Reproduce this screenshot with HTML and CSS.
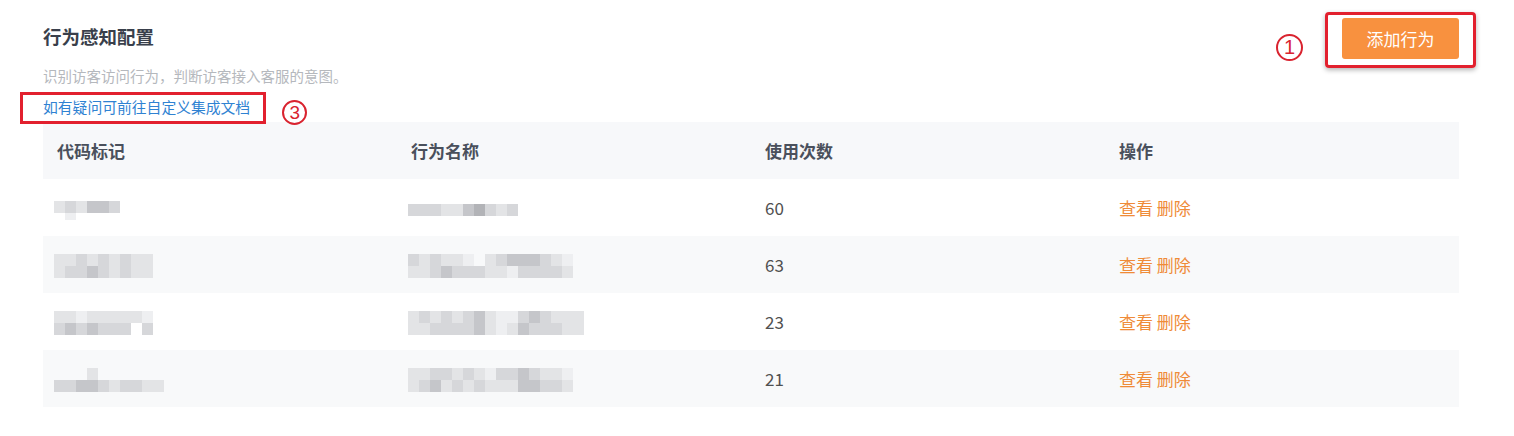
FILE: index.html
```html
<!DOCTYPE html>
<html>
<head>
    <meta charset="utf-8">
    <title>行为感知配置</title>
    <link rel="stylesheet" href="styles.css">
</head>
<body>
    <div class="page">
        <div class="top">
            <div class="intro">
                <h2 class="title">行为感知配置</h2>
                <p class="desc">识别访客访问行为，判断访客接入客服的意图。</p>
                <div class="help">
                    <div class="mark-box help-box">
                        <a href="#">如有疑问可前往自定义集成文档</a>
                    </div>
                    <span class="circle-num num-3">3</span>
                </div>
            </div>

            <div class="actions">
                <span class="circle-num num-1">1</span>
                <div class="mark-box btn-box">
                    <button class="btn-add">添加行为</button>
                </div>
            </div>
        </div>

        <table class="behavior-table">
            <thead>
                <tr>
                    <th>代码标记</th>
                    <th>行为名称</th>
                    <th>使用次数</th>
                    <th>操作</th>
                </tr>
            </thead>
            <tbody>
                <tr>
                    <td>
                        <div class="mosaic">
                            <div class="mrow"><i class="b"></i><i class="c"></i><i class="b"></i><i class="d"></i><i class="d"></i><i class="c"></i></div>
                            <div class="mrow short"><i class="o"></i><i class="a"></i></div>
                        </div>
                    </td>
                    <td>
                        <div class="mosaic">
                            <div class="mrow"><i class="c"></i><i class="c"></i><i class="c"></i><i class="b"></i><i class="b"></i><i class="d"></i><i class="e"></i><i class="c"></i><i class="b"></i><i class="c"></i></div>
                        </div>
                    </td>
                    <td>60</td>
                    <td><a class="op" href="#">查看</a> <a class="op" href="#">删除</a></td>
                </tr>
                <tr class="alt">
                    <td>
                        <div class="mosaic">
                            <div class="mrow"><i class="b"></i><i class="b"></i><i class="c"></i><i class="b"></i><i class="c"></i><i class="b"></i><i class="c"></i><i class="b"></i><i class="b"></i></div>
                            <div class="mrow"><i class="b"></i><i class="c"></i><i class="c"></i><i class="d"></i><i class="c"></i><i class="b"></i><i class="c"></i><i class="b"></i><i class="b"></i></div>
                        </div>
                    </td>
                    <td>
                        <div class="mosaic">
                            <div class="mrow"><i class="c"></i><i class="b"></i><i class="c"></i><i class="b"></i><i class="b"></i><i class="a"></i><i class="o"></i><i class="b"></i><i class="c"></i><i class="d"></i><i class="d"></i><i class="d"></i><i class="c"></i><i class="b"></i><i class="a"></i></div>
                            <div class="mrow"><i class="b"></i><i class="b"></i><i class="c"></i><i class="d"></i><i class="c"></i><i class="c"></i><i class="c"></i><i class="b"></i><i class="b"></i><i class="a"></i><i class="c"></i><i class="c"></i><i class="c"></i><i class="c"></i><i class="b"></i></div>
                        </div>
                    </td>
                    <td>63</td>
                    <td><a class="op" href="#">查看</a> <a class="op" href="#">删除</a></td>
                </tr>
                <tr>
                    <td>
                        <div class="mosaic">
                            <div class="mrow"><i class="b"></i><i class="b"></i><i class="a"></i><i class="b"></i><i class="b"></i><i class="b"></i><i class="b"></i><i class="b"></i><i class="a"></i></div>
                            <div class="mrow"><i class="c"></i><i class="d"></i><i class="c"></i><i class="d"></i><i class="c"></i><i class="c"></i><i class="c"></i><i class="o"></i><i class="c"></i></div>
                        </div>
                    </td>
                    <td>
                        <div class="mosaic">
                            <div class="mrow"><i class="b"></i><i class="c"></i><i class="b"></i><i class="c"></i><i class="b"></i><i class="c"></i><i class="d"></i><i class="b"></i><i class="a"></i><i class="a"></i><i class="c"></i><i class="d"></i><i class="c"></i><i class="b"></i><i class="b"></i><i class="b"></i></div>
                            <div class="mrow"><i class="b"></i><i class="b"></i><i class="c"></i><i class="c"></i><i class="c"></i><i class="c"></i><i class="d"></i><i class="b"></i><i class="a"></i><i class="b"></i><i class="d"></i><i class="c"></i><i class="c"></i><i class="c"></i><i class="b"></i><i class="b"></i></div>
                        </div>
                    </td>
                    <td>23</td>
                    <td><a class="op" href="#">查看</a> <a class="op" href="#">删除</a></td>
                </tr>
                <tr class="alt">
                    <td>
                        <div class="mosaic">
                            <div class="mrow"><i class="o"></i><i class="o"></i><i class="o"></i><i class="b"></i></div>
                            <div class="mrow"><i class="c"></i><i class="c"></i><i class="d"></i><i class="d"></i><i class="c"></i><i class="b"></i><i class="c"></i><i class="c"></i><i class="b"></i><i class="b"></i></div>
                        </div>
                    </td>
                    <td>
                        <div class="mosaic">
                            <div class="mrow"><i class="b"></i><i class="b"></i><i class="c"></i><i class="c"></i><i class="b"></i><i class="c"></i><i class="b"></i><i class="a"></i><i class="c"></i><i class="c"></i><i class="d"></i><i class="c"></i><i class="b"></i><i class="b"></i><i class="a"></i></div>
                            <div class="mrow"><i class="b"></i><i class="c"></i><i class="d"></i><i class="b"></i><i class="c"></i><i class="b"></i><i class="c"></i><i class="b"></i><i class="b"></i><i class="b"></i><i class="d"></i><i class="d"></i><i class="c"></i><i class="c"></i><i class="b"></i></div>
                        </div>
                    </td>
                    <td>21</td>
                    <td><a class="op" href="#">查看</a> <a class="op" href="#">删除</a></td>
                </tr>
            </tbody>
        </table>
    </div>
</body>
</html>
```

FILE: styles.css
```css
body {
    margin: 0;
    background-color: #fff;
    font-family: "Noto Sans CJK SC", "Noto Sans", sans-serif;
}

.page {
    padding: 0 55px 0 43px;
}

.top {
    display: flex;
    justify-content: space-between;
    align-items: flex-start;
}

.intro {
    padding-top: 20px;
}

.title {
    margin: 0;
    font-size: 18.5px;
    line-height: 32px;
    font-weight: bold;
    color: #393f4b;
}

.desc {
    margin: 14px 0 0;
    font-size: 14.5px;
    line-height: 20px;
    color: #b5b8bd;
}

.help {
    display: flex;
    align-items: flex-end;
    margin: 6px 0 0 -23px;
}

.mark-box {
    border: 3px solid #e2202e;
}

.help-box {
    padding: 2px 13px 4px 20px;
}

.help-box a {
    display: block;
    font-size: 14.8px;
    line-height: 20px;
    color: #2f82d2;
    text-decoration: none;
}

.circle-num {
    display: flex;
    align-items: center;
    justify-content: center;
    box-sizing: border-box;
    border: 2px solid #d9232f;
    border-radius: 50%;
    color: #d9232f;
    font-family: "Liberation Sans", sans-serif;
}

.num-3 {
    width: 25px;
    height: 25px;
    margin: 0 0 -1px 16px;
    font-size: 19px;
}

.actions {
    display: flex;
    align-items: flex-start;
    padding-top: 12px;
    margin-right: -17px;
}

.num-1 {
    width: 27px;
    height: 27px;
    margin: 22px 22px 0 0;
    font-size: 20px;
}

.btn-box {
    padding: 3px 14px 6px;
    border-radius: 4px;
    box-shadow: 0 2px 5px rgba(0, 0, 0, 0.3);
}

.btn-add {
    display: block;
    width: 117px;
    height: 41px;
    border: none;
    border-radius: 3px;
    background-color: #f8913f;
    color: #fff;
    font-family: inherit;
    font-size: 17px;
}

.behavior-table {
    width: 100%;
    margin-top: -2px;
    border-collapse: collapse;
    table-layout: fixed;
}

.behavior-table th,
.behavior-table td {
    height: 57px;
    padding: 0 14px;
    text-align: left;
    font-size: 17px;
}

.behavior-table th {
    background-color: #f7f8fa;
    color: #4a505c;
    font-weight: bold;
}

.behavior-table td {
    color: #505050;
}

.behavior-table tr.alt td {
    background-color: #f8f9fa;
}

.op {
    color: #ef8b38;
    text-decoration: none;
}

.mosaic {
    display: inline-block;
    vertical-align: middle;
    filter: blur(0.6px);
    margin-left: -3px;
}

.mrow {
    display: flex;
}

.mrow i {
    width: 11px;
    height: 12px;
}

.mrow.short i {
    height: 7px;
}

.mrow i.o { background-color: transparent; }
.mrow i.a { background-color: #eeeff1; }
.mrow i.b { background-color: #e3e4e6; }
.mrow i.c { background-color: #d6d7da; }
.mrow i.d { background-color: #c5c6ca; }
.mrow i.e { background-color: #b2b3b7; }
```
